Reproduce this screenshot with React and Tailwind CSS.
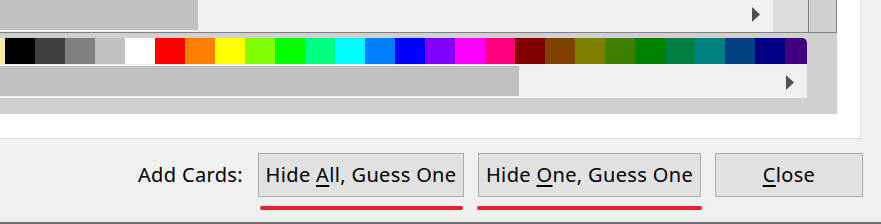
import React from "react";

const swatches = [
  "#ffe8a0",
  "#000000",
  "#404040",
  "#808080",
  "#c0c0c0",
  "#ffffff",
  "#ff0000",
  "#ff8000",
  "#ffff00",
  "#80ff00",
  "#00ff00",
  "#00ff80",
  "#00ffff",
  "#0080ff",
  "#0000ff",
  "#8000ff",
  "#ff00ff",
  "#ff0080",
  "#800000",
  "#804000",
  "#808000",
  "#408000",
  "#008000",
  "#008040",
  "#008080",
  "#004080",
  "#000080",
  "#400080",
];

const ArrowRight = () => (
  <svg width="8" height="15" viewBox="0 0 8 15">
    <path d="M0 0 L8 7.5 L0 15 Z" fill="#505050" />
  </svg>
);

const Button = ({ width, children, line, lineClass }) => (
  <div className="flex flex-col">
    <button
      className={`h-[44px] ${width} bg-[#e1e1e1] border border-[#adadad] text-black text-[20px] tracking-[0.35px] flex items-center justify-center`}
    >
      {children}
    </button>
    {line && (
      <div className={`mt-[9px] h-[4px] rounded-full bg-[#e4202c] ${lineClass}`} />
    )}
  </div>
);

export default function App() {
  return (
    <div
      className="w-[881px] h-[224px] overflow-hidden bg-[#f0f0f0] flex flex-col"
      style={{ fontFamily: '"Noto Sans", "Liberation Sans", sans-serif' }}
    >
      {/* Preview panel */}
      <div className="w-[861px] h-[139px] bg-white border-r border-b border-[#dcdcdc] flex-none">
        <div className="w-[837px] h-[114px] bg-[#d0d0d0] flex flex-col">
          {/* Top scroll row */}
          <div className="h-[33px] flex border-b border-r border-[#808080]">
            <div className="w-[773px] bg-[#f0f0f0] flex">
              <div className="w-[198px] h-[30px] bg-[#c0c0c0]" />
              <div className="flex-1 flex justify-end pt-[7px] pr-[13px]">
                <ArrowRight />
              </div>
            </div>
            <div className="w-[36px] bg-[#dcdcdc] border-r border-[#808080]" />
            <div className="flex-1 bg-[#d0d0d0]" />
          </div>

          {/* Colour strip */}
          <div className="mt-[5px] w-[807px] h-[26px] flex overflow-hidden rounded-tr-[5px]">
            {swatches.map((c, i) => (
              <div
                key={i}
                className={i === 0 ? "w-[5px] flex-none" : "w-[30px] flex-none"}
                style={{ backgroundColor: c }}
              />
            ))}
          </div>

          {/* Lower scrollbar */}
          <div className="w-[807px] h-[34px] bg-[#f0f0f0] flex">
            <div className="mt-[2px] w-[519px] h-[30px] bg-[#c0c0c0]" />
            <div className="flex-1 flex justify-end pt-[11px] pr-[13px]">
              <ArrowRight />
            </div>
          </div>
        </div>
      </div>

      {/* Buttons */}
      <div className="flex-1 flex items-start pt-[14px]">
        <span className="w-[243px] h-[44px] flex items-center justify-end text-[20px] tracking-[0.35px] text-black mr-[15px]">
          Add Cards:
        </span>
        <Button width="w-[206px]" line lineClass="ml-[2px] w-[203px]">
          <span>
            Hide <span className="underline underline-offset-[3px]">A</span>ll, Guess One
          </span>
        </Button>
        <div className="w-[14px]" />
        <Button width="w-[223px]" line lineClass="-ml-[1px] w-[225px]">
          <span>
            Hide <span className="underline underline-offset-[3px]">O</span>ne, Guess One
          </span>
        </Button>
        <div className="w-[13px]" />
        <Button width="w-[148px]">
          <span>
            <span className="underline underline-offset-[3px]">C</span>lose
          </span>
        </Button>
      </div>
      <div className="h-[2px] bg-[#6d6d6d] flex-none" />
    </div>
  );
}
